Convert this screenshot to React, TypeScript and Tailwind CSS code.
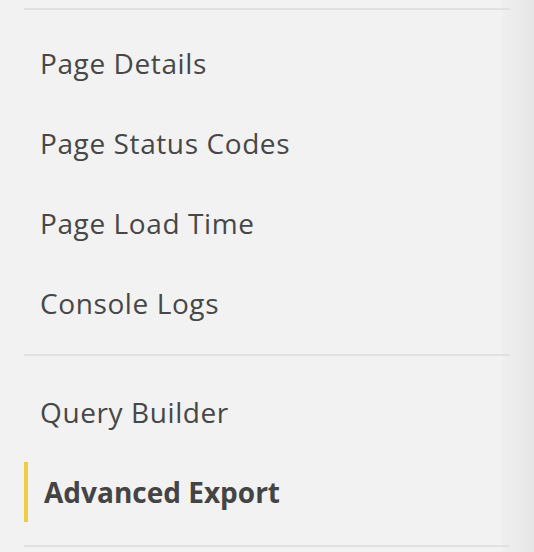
import React from "react";

type Item = { label: string; active?: boolean };

const groups: Item[][] = [
  [
    { label: "Page Details" },
    { label: "Page Status Codes" },
    { label: "Page Load Time" },
    { label: "Console Logs" },
  ],
  [{ label: "Query Builder" }, { label: "Advanced Export", active: true }],
];

function NavItem({ item }: { item: Item }) {
  return (
    <div className="h-[80px] pt-[11px] pb-[9px]">
      <div
        className={
          item.active
            ? "h-[60px] flex items-center border-l-4 border-[#efcc40] pl-4 font-bold text-[#444444]"
            : "h-[60px] flex items-center pl-4 text-[#474747] tracking-[0.6px]"
        }
      >
        {item.label}
      </div>
    </div>
  );
}

export default function App() {
  return (
    <div
      className="h-[552px] w-full overflow-hidden pt-[8px] bg-[linear-gradient(to_right,#f2f2f2_501px,#efefef_503px,#e6e6e6_534px)] text-[28px] leading-none"
      style={{ fontFamily: '"Open Sans", "Noto Sans", sans-serif' }}
    >
      <div className="ml-6 w-[486px]">
        <div className="h-[2px] bg-[#e1e1e1]" />

        {/* first group */}
        <div className="pt-[12px] pb-[12px]">
          {groups[0].map((it) => (
            <NavItem key={it.label} item={it} />
          ))}
        </div>

        <div className="h-[2px] bg-[#e1e1e1]" />

        {/* second group */}
        <div className="pt-[15px] pb-[14px]">
          {groups[1].map((it) => (
            <NavItem key={it.label} item={it} />
          ))}
        </div>

        <div className="h-[2px] bg-[#e1e1e1]" />
      </div>
    </div>
  );
}
